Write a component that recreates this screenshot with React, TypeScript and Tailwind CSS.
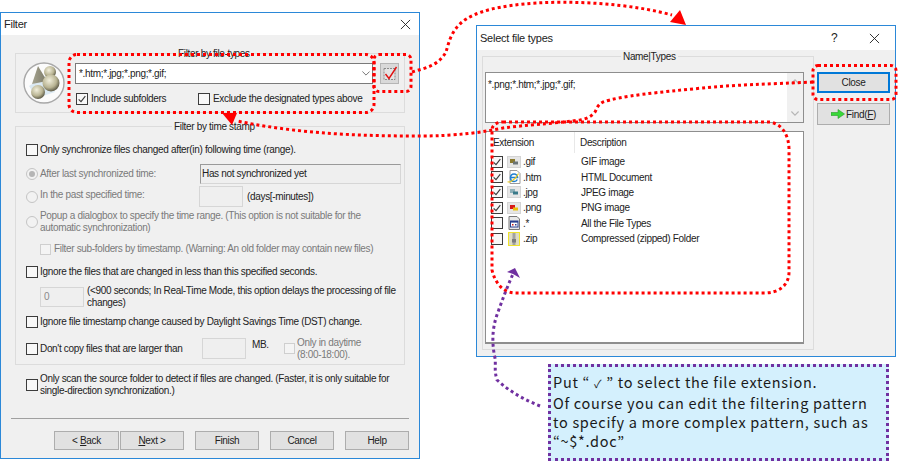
import type { ReactNode } from 'react';

const FONT = 'font-["Liberation_Sans",Arial,sans-serif] tracking-[-0.33px]';

const Check = () => (
  <svg viewBox="0 0 12 12" className="w-full h-full">
    <path d="M2 6.5 L4.8 9.2 L10 2.6" fill="none" stroke="#3a3a3a" strokeWidth="1.3" />
  </svg>
);

const Box = ({ checked, small, disabled }: { checked?: boolean; small?: boolean; disabled?: boolean }) => (
  <span
    className={`block shrink-0 border ${small ? 'w-[11px] h-[11px]' : 'w-[12px] h-[12px]'} ${
      disabled ? 'border-[#cfcfcf] bg-[#f4f4f4]' : 'border-[#3c3c3c] bg-[#f8f8f8]'
    }`}
  >
    {checked && <Check />}
  </span>
);

const Radio = ({ checked }: { checked?: boolean }) => (
  <span className="flex items-center justify-center shrink-0 w-[12px] h-[12px] rounded-full border border-[#c4c4c4] bg-[#f2f2f2]">
    {checked && <span className="block w-[6px] h-[6px] rounded-full bg-[#b5b5b5]" />}
  </span>
);

const Field = ({ className, children }: { className: string; children?: ReactNode }) => (
  <div className={`border border-[#d6d6d6] bg-[#efefef] shrink-0 ${className}`}>{children}</div>
);

const Legend = ({ children, className }: { children: ReactNode; className: string }) => (
  <span className={`absolute -top-[7px] bg-[#f0f0f0] px-[2px] text-[10px] leading-[13px] text-[#222] ${className}`}>
    {children}
  </span>
);

const Btn = ({ children, className }: { children: ReactNode; className: string }) => (
  <button className={`h-[19px] border border-[#adadad] bg-[#e1e1e1] text-[10px] leading-none text-[#222] ${className}`}>
    {children}
  </button>
);

const CloseX = () => (
  <svg viewBox="0 0 12 12" className="w-[11px] h-[11px]">
    <path d="M1 1 L11 11 M11 1 L1 11" stroke="#222" strokeWidth="1" />
  </svg>
);

const Spheres = () => (
  <svg viewBox="0 0 42 42" className="w-[42px] h-[42px] shrink-0">
    <defs>
      <radialGradient id="ball" cx="40%" cy="35%" r="70%">
        <stop offset="0%" stopColor="#f2efdc" />
        <stop offset="60%" stopColor="#b9b493" />
        <stop offset="100%" stopColor="#4e4b3a" />
      </radialGradient>
      <linearGradient id="cone" x1="0" x2="1">
        <stop offset="0%" stopColor="#a5a38f" />
        <stop offset="100%" stopColor="#7c7a68" />
      </linearGradient>
    </defs>
    <circle cx="21" cy="21" r="20" fill="#fbfbfb" stroke="#a8a8a8" strokeWidth="1.4" />
    <path d="M6 24 L22 14 L32 30 L14 36 Z" fill="#dbe9f2" />
    <path d="M15 4 L24 19 L9 22 Z" fill="url(#cone)" />
    <circle cx="27" cy="10" r="6" fill="url(#ball)" />
    <circle cx="28" cy="21" r="8.5" fill="url(#ball)" />
    <circle cx="15" cy="30" r="7" fill="url(#ball)" />
  </svg>
);

const Row = ({ className, children }: { className: string; children: ReactNode }) => (
  <div className={`flex items-center ${className}`}>{children}</div>
);

const FilterDialog = () => (
  <div className="w-[420px] h-[447px] mt-[12px] shrink-0 border border-[#2b88d8] bg-[#f0f0f0] flex flex-col">
    <div className="h-[22px] bg-white flex items-center justify-between pl-[3px] pr-[8px] text-[11px] tracking-[-0.25px] text-[#222]">
      <span>Filter</span>
      <CloseX />
    </div>
    <div className="relative mx-[14px] mt-[18px] h-[60px] border border-[#dcdcdc] flex items-center pl-[7px]">
      <Legend className="left-[160px]">Filter by file-types</Legend>
      <Spheres />
      <div className="ml-[10px] w-[298px] self-start pt-[9px]">
        <div className="h-[21px] border border-[#7a7a7a] bg-white flex items-center justify-between pl-[3px] pr-[2px] text-[10px] text-[#222]">
          <span>*.htm;*.jpg;*.png;*.gif;</span>
          <svg viewBox="0 0 10 6" className="w-[8px] h-[5px]">
            <path d="M0.5 0.5 L5 5 L9.5 0.5" fill="none" stroke="#555" />
          </svg>
        </div>
        <div className="flex mt-[9px] text-[10px] leading-[12px] text-[#222]">
          <div className="flex items-center w-[123px] pl-[1px] gap-[3px]">
            <Box checked />
            <span>Include subfolders</span>
          </div>
          <div className="flex items-center gap-[3px]">
            <Box />
            <span>Exclude the designated types above</span>
          </div>
        </div>
      </div>
      <div className="ml-[7px] self-start mt-[9px] w-[19px] h-[21px] border border-[#b5b5b5] bg-[#d9d9d9] flex items-center justify-center">
        <svg viewBox="0 0 16 16" className="w-[16px] h-[16px]">
          <rect x="2" y="2.5" width="11" height="11" fill="#e4e4e4" stroke="#8a8a8a" strokeDasharray="2 1" />
          <path d="M3.5 8 L7 12.5 L14.5 1" fill="none" stroke="#e01010" strokeWidth="1.4" />
        </svg>
      </div>
    </div>

    <div className="relative mx-[14px] mt-[13px] h-[239px] border border-[#dcdcdc] pl-[10px] pt-[13px] text-[10px] leading-[12px] text-[#222]">
      <Legend className="left-[156px]">Filter by time stamp</Legend>
      <Row className="h-[20px] gap-[2px]">
        <Box />
        <span>Only synchronize files changed after(in) following time (range).</span>
      </Row>
      <Row className="h-[20px] mt-[4px] gap-[2px]">
        <Radio checked />
        <span className="w-[158px] text-[#7a7a7a]">After last synchronized time:</span>
        <Field className="w-[201px] h-[20px] border-t-[#9a9a9a] border-l-[#9a9a9a] flex items-center pl-[1px]">
          Has not synchronized yet
        </Field>
      </Row>
      <Row className="h-[21px] mt-[2px] gap-[2px]">
        <Radio />
        <span className="w-[157px] text-[#7a7a7a] -mt-[4px]">In the past specified time:</span>
        <Field className="w-[44px] h-[21px]" />
        <span className="ml-[2px]">(days[-minutes])</span>
      </Row>
      <Row className="h-[24px] mt-[3px] gap-[2px]">
        <Radio />
        <span className="w-[335px] text-[#7a7a7a]">
          Popup a dialogbox to specify the time range. (This option is not suitable for the automatic synchronization)
        </span>
      </Row>
      <Row className="h-[20px] mt-[5px] pl-[14px] gap-[3px] text-[#7a7a7a]">
        <Box small disabled />
        <span>Filter sub-folders by timestamp. (Warning: An old folder may contain new files)</span>
      </Row>
      <Row className="h-[20px] mt-[3px] gap-[2px]">
        <Box />
        <span>Ignore the files that are changed in less than this specified seconds.</span>
      </Row>
      <Row className="h-[20px] mt-[5px] pl-[14px] gap-[3px]">
        <Field className="w-[44px] h-[20px] flex items-center pl-[3px] text-[#8a8a8a]">0</Field>
        <span className="w-[320px]">
          (&lt;900 seconds; In Real-Time Mode, this option delays the processing of file changes)
        </span>
      </Row>
      <Row className="h-[20px] mt-[5px] gap-[2px]">
        <Box />
        <span>Ignore file timestamp change caused by Daylight Savings Time (DST) change.</span>
      </Row>
      <Row className="h-[21px] mt-[6px]">
        <Box />
        <span className="w-[162px] ml-[2px]">Don't copy files that are larger than</span>
        <Field className="w-[44px] h-[21px]" />
        <span className="ml-[6px] w-[32px] -mt-[7px]">MB.</span>
        <Box small disabled />
        <span className="ml-[2px] w-[70px] text-[#7a7a7a]">Only in daytime (8:00-18:00).</span>
      </Row>
    </div>

    <Row className="h-[24px] mt-[8px] ml-[25px] gap-[2px] text-[10px] leading-[12px] text-[#222]">
      <Box />
      <span className="w-[365px]">
        Only scan the source folder to detect if files are changed. (Faster, it is only suitable for single-direction synchronization.)
      </span>
    </Row>
    <div className="h-px bg-[#a0a0a0] mx-[10px] mt-[21px]" />
    <div className="flex pl-[53px] mt-[12px]">
      <Btn className="w-[65px]">
        &lt; <u>B</u>ack
      </Btn>
      <Btn className="w-[64px] ml-[1px]">
        <u>N</u>ext &gt;
      </Btn>
      <Btn className="w-[64px] ml-[11px]">Finish</Btn>
      <Btn className="w-[64px] ml-[11px]">Cancel</Btn>
      <Btn className="w-[64px] ml-[11px]">Help</Btn>
    </div>
  </div>
);

const FileIcon = ({ kind }: { kind: string }) => {
  if (kind === 'htm') {
    return (
      <svg viewBox="0 0 14 14" className="w-[14px] h-[14px]">
        <path d="M3 0.5 H10 L13 3.5 V13.5 H3 Z" fill="#fff" stroke="#999" />
        <path d="M3.6 7.6 H10.6 C10.6 5.4 9 4 7.1 4 C5 4 3.5 5.7 3.5 7.8 C3.5 10 5 11.5 7.1 11.5 C8.6 11.5 9.8 10.7 10.3 9.5" fill="none" stroke="#1f7fd0" strokeWidth="1.5" />
        <path d="M0.8 11.5 C1.5 13.5 9 9.5 11.5 3.5" fill="none" stroke="#e8c81c" strokeWidth="1.1" />
      </svg>
    );
  }
  if (kind === 'all') {
    return (
      <svg viewBox="0 0 14 14" className="w-[14px] h-[14px]">
        <path d="M2 0.5 H10 L12.5 3 V13.5 H2 Z" fill="#e8e8e8" stroke="#777" />
        <rect x="3.5" y="5" width="7.5" height="6" fill="#fff" stroke="#2a3f8f" />
        <rect x="3.5" y="5" width="7.5" height="1.6" fill="#2a3f8f" />
        <rect x="5" y="8" width="1.5" height="1.5" fill="#c82020" />
        <rect x="8" y="8" width="1.5" height="1.5" fill="#2a3f8f" />
      </svg>
    );
  }
  if (kind === 'zip') {
    return (
      <svg viewBox="0 0 14 14" className="w-[14px] h-[14px]">
        <rect x="1.5" y="0.5" width="11" height="13" fill="#dedcc4" stroke="#efe32c" />
        <rect x="5.5" y="1" width="3" height="12" fill="#a2a2a2" />
        <rect x="5" y="7" width="4" height="3.5" fill="#7c7c7c" />
      </svg>
    );
  }
  const spot = kind === 'png' ? '#d81818' : kind === 'gif' ? '#8a7a30' : '#8fb0b8';
  const spot2 = kind === 'png' ? '#e8c010' : kind === 'gif' ? '#6a7478' : '#3a7a8a';
  return (
    <svg viewBox="0 0 14 14" className="w-[14px] h-[14px]">
      <rect x="0.5" y="1.5" width="13" height="11" fill="#e6e6e6" stroke="#d4d4d4" />
      <rect x="3" y="4" width="5" height="4" fill={spot} />
      <rect x="6" y="6.5" width="5" height="3" fill={spot2} />
    </svg>
  );
};

const FILE_TYPES = [
  { ext: '.gif', desc: 'GIF image', kind: 'gif', checked: true },
  { ext: '.htm', desc: 'HTML Document', kind: 'htm', checked: true },
  { ext: '.jpg', desc: 'JPEG image', kind: 'jpg', checked: true },
  { ext: '.png', desc: 'PNG image', kind: 'png', checked: true },
  { ext: '.*', desc: 'All the File Types', kind: 'all', checked: false },
  { ext: '.zip', desc: 'Compressed (zipped) Folder', kind: 'zip', checked: false },
];

const SelectDialog = () => (
  <div className="w-[420px] h-[333px] border border-[#2b88d8] bg-[#f0f0f0] flex flex-col">
    <div className="h-[24px] bg-white flex items-center pl-[3px] text-[11px] tracking-[-0.25px] text-[#222] shrink-0">
      <span className="w-[351px]">Select file types</span>
      <span className="w-[38px] text-[12px]">?</span>
      <CloseX />
    </div>
    <div className="flex pl-[5px] pt-[6px]">
      <div className="relative w-[332px] h-[294px] border border-[#dcdcdc] pl-[2px] pt-[15px] text-[10px] text-[#222]">
        <Legend className="left-[138px]">Name|Types</Legend>
        <div className="relative w-[319px] h-[51px] border border-[#8e8e8e] bg-white pl-[2px] pt-[5px] leading-[13px]">
          *.png;*.htm;*.jpg;*.gif;
          <div className="absolute right-0 top-0 bottom-0 w-[16px] bg-[#f0f0f0] flex flex-col items-center justify-between py-[6px]">
            <svg viewBox="0 0 10 6" className="w-[8px] h-[5px]">
              <path d="M0.5 5.5 L5 1 L9.5 5.5" fill="none" stroke="#b5b5b5" strokeWidth="1.4" />
            </svg>
            <svg viewBox="0 0 10 6" className="w-[8px] h-[5px]">
              <path d="M0.5 0.5 L5 5 L9.5 0.5" fill="none" stroke="#b5b5b5" strokeWidth="1.4" />
            </svg>
          </div>
        </div>
        <div className="w-[319px] h-[213px] mt-[8px] border border-[#8e8e8e] border-b-2 bg-white">
          <div className="flex h-[21px] items-center mb-[1px]">
            <span className="w-[89px] pl-[7px] h-full flex items-center border-r border-[#e8e8e8]">Extension</span>
            <span className="pl-[5px]">Description</span>
          </div>
          {FILE_TYPES.map((t) => (
            <div key={t.ext} className="flex items-center h-[15.4px] pl-[5px]">
              <Box checked={t.checked} />
              <span className="ml-[3px] w-[16px] flex justify-center">
                <FileIcon kind={t.kind} />
              </span>
              <span className="w-[58px] ml-[1px]">{t.ext}</span>
              <span>{t.desc}</span>
            </div>
          ))}
        </div>
      </div>
      <div className="ml-[3px] pt-[16px] flex flex-col">
        <button className="w-[73px] h-[21px] border-2 border-[#0078d7] bg-[#e1e1e1] text-[10px] text-[#222]">Close</button>
        <button className="w-[73px] h-[22px] mt-[10px] border border-[#adadad] bg-[#e1e1e1] text-[10px] text-[#222] flex items-center justify-center gap-[1px]">
          <svg viewBox="0 0 14 10" className="w-[14px] h-[10px]">
            <path d="M0 3.5 H7 V0.5 L13.5 5 L7 9.5 V6.5 H0 Z" fill="#38d838" stroke="#2a9a2a" strokeWidth="0.6" />
          </svg>
          <span>
            Find(<u>F</u>)
          </span>
        </button>
      </div>
    </div>
  </div>
);

const Note = () => (
  <div className="ml-[72px] mt-[7px] w-[341px] h-[97px] border-[3px] border-dotted border-[#7030a0] bg-[#d4f0fd] pl-[2px] pt-[5px] font-['Noto_Sans_CJK_JP','Noto_Sans',sans-serif] text-[14.5px] leading-[19px] tracking-[0.7px] text-[#1a1a1a]">
    <p>
      Put “ <span className="text-[11px]">✓</span> ” to select the file extension.
    </p>
    <p>Of course you can edit the filtering pattern</p>
    <p>to specify a more complex pattern, such as</p>
    <p>“~$*.doc”</p>
  </div>
);

const Annotations = () => (
  <svg viewBox="0 0 898 461" className="absolute inset-0 w-[898px] h-[461px] pointer-events-none">
    <g fill="none" stroke="#ff0000" strokeWidth="3" strokeDasharray="3 3">
      <rect x="69" y="54.5" width="305" height="58" rx="8" />
      <rect x="374" y="54.5" width="37" height="37" rx="5" />
      <path d="M412 72 C425 68 438 66 446 52 C449 42 452 24 474 15 C510 -2 610 -2 672 15" />
      <rect x="813" y="65.5" width="83" height="34" rx="5" />
      <path d="M813 82 C770 84 730 85 703 88 C660 92 620 96 603 102 C597 105 597 109 595 112 C590 118 585 119 580 120 C550 124 525 125 503 128 C470 135 440 136 419 136 C360 136 300 134 237 121" />
      <path d="M503 122 H770 C782 124 789 135 789 150 V272 C789 286 778 293 764 293 H516 C503 293 495 283 492 270 V130 C492 125 497 122 503 122" />
    </g>
    <path d="M222 113 L237 113 L232 125 Z" fill="#ff0000" />
    <path d="M670 22 L680 10 L686 25 Z" fill="#ff0000" />
    <path
      d="M540 406 C525 400 510 392 497 380 C494 370 496 366 495 358 C491 340 493 325 498 312 C503 298 508 285 513 274"
      fill="none"
      stroke="#7030a0"
      strokeWidth="3"
      strokeDasharray="3 3"
    />
    <path d="M515 268 L520 278 L513 274 L507 272 Z" fill="#7030a0" />
  </svg>
);

export default function App() {
  return (
    <div className={`relative w-[898px] h-[461px] overflow-hidden bg-white flex ${FONT}`}>
      <FilterDialog />
      <div className="ml-[56px] mt-[25px] flex flex-col">
        <SelectDialog />
        <Note />
      </div>
      <Annotations />
    </div>
  );
}
